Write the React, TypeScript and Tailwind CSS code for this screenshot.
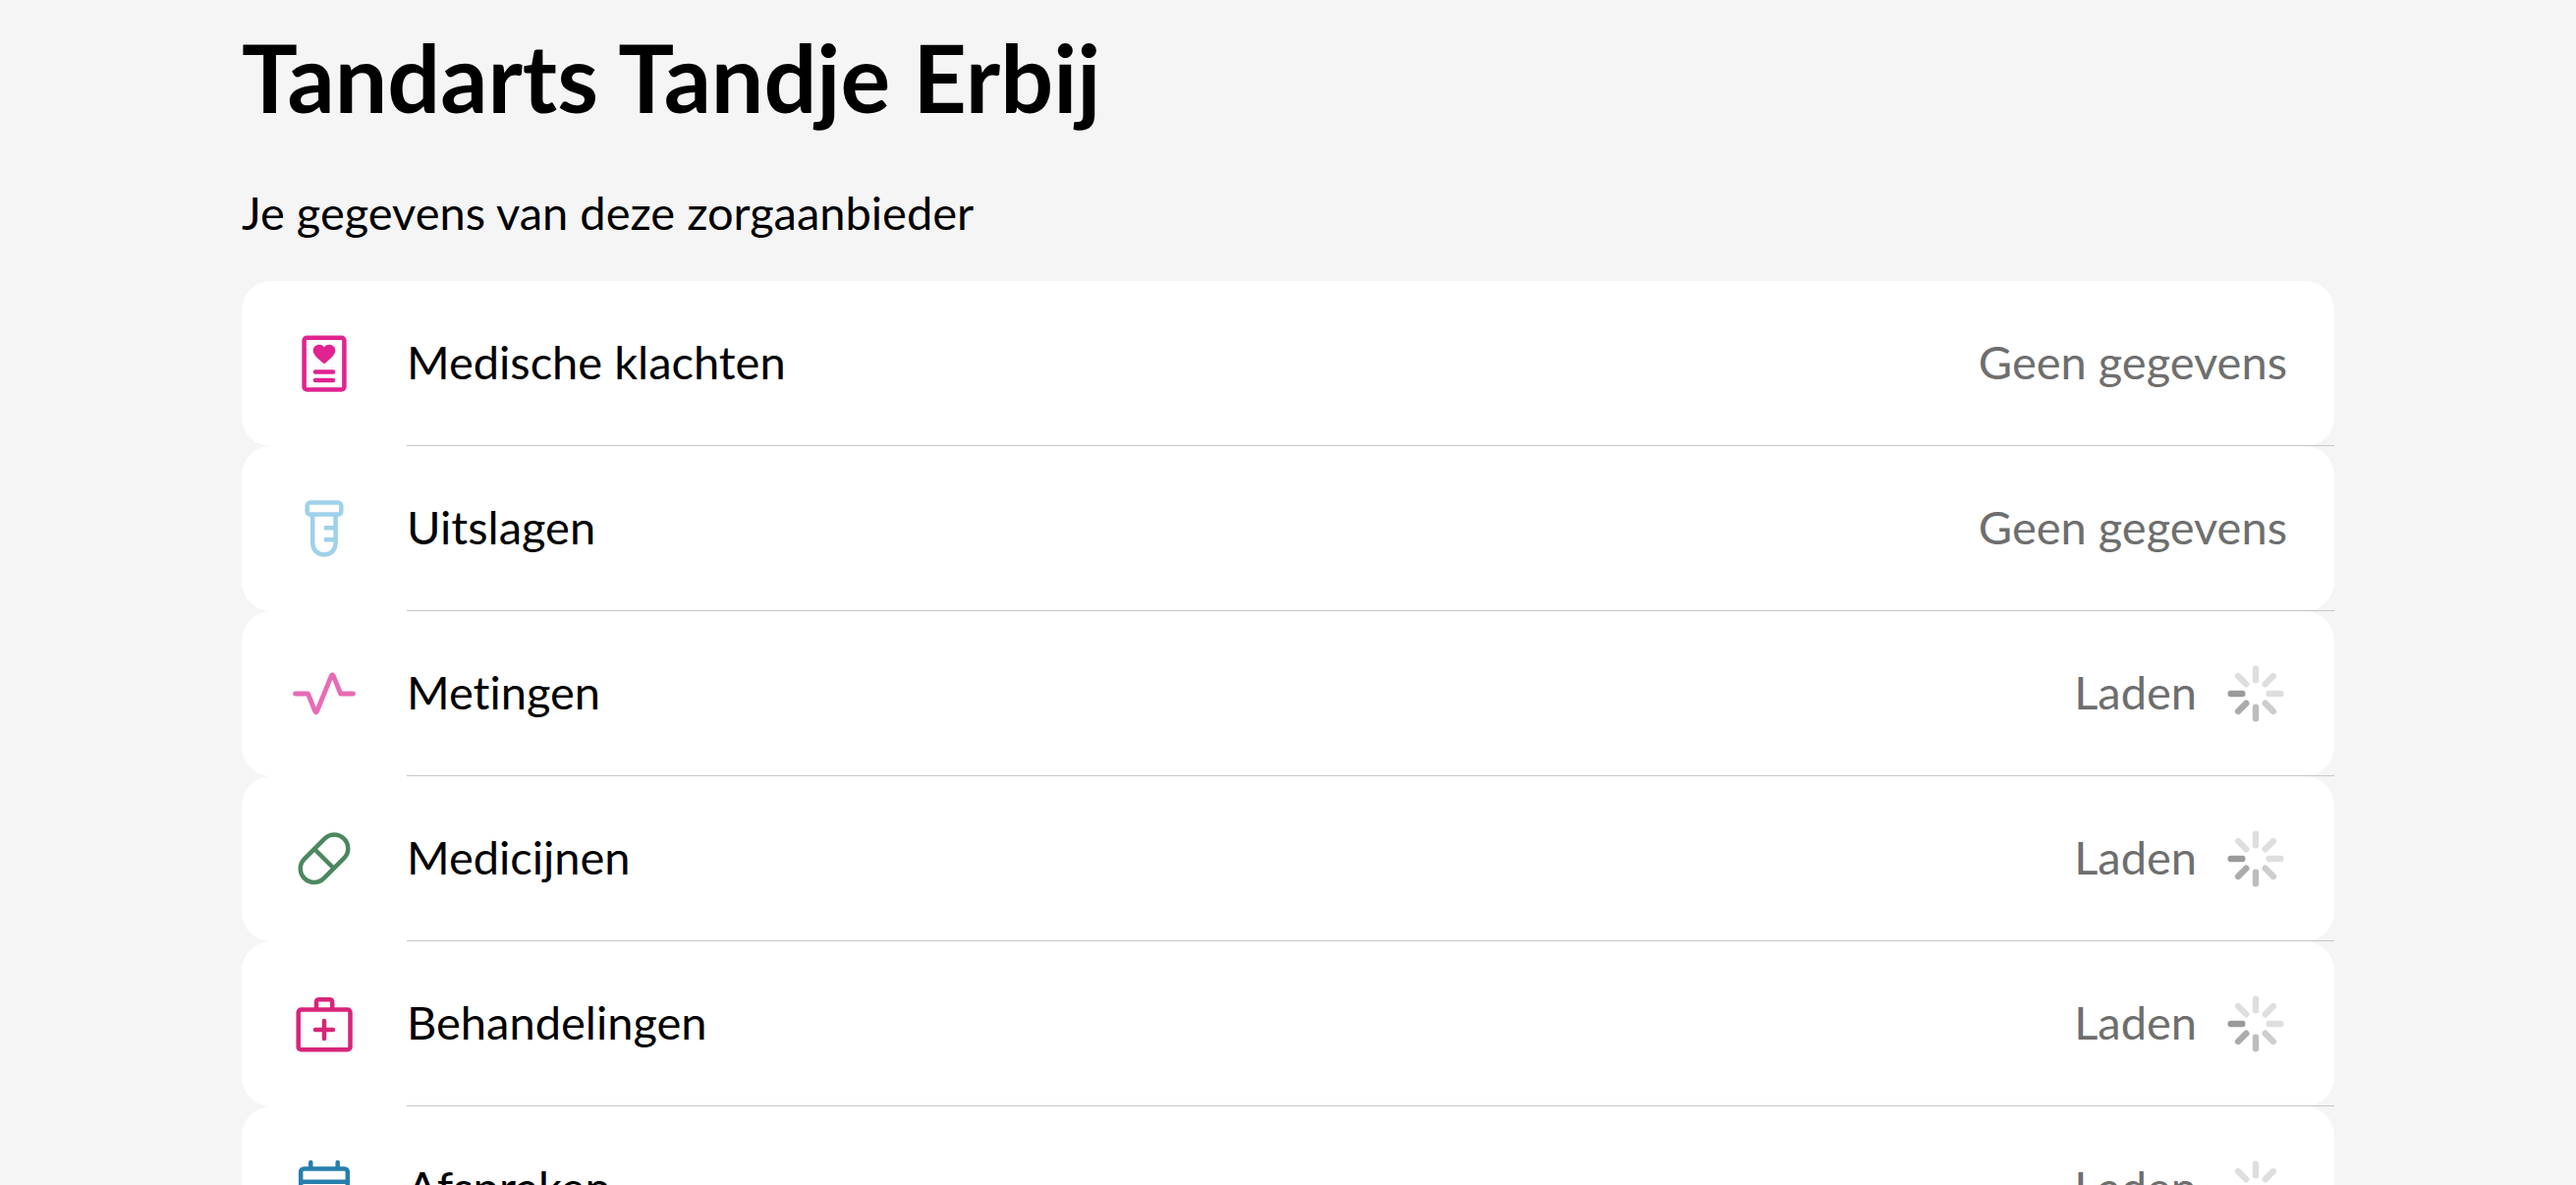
import type { ReactNode } from "react";

type Item = { label: string; loading: boolean; icon: ReactNode };

function Icon({ color, children }: { color: string; children: ReactNode }) {
  return (
    <svg
      viewBox="0 0 80 80"
      className={`size-20 shrink-0 fill-none stroke-current ${color}`}
      strokeWidth="4.5"
      strokeLinecap="round"
      strokeLinejoin="round"
      aria-hidden="true"
    >
      {children}
    </svg>
  );
}

function Spinner() {
  const spokes = [
    { angle: 0, color: "#dedede" },
    { angle: 45, color: "#dedede" },
    { angle: 90, color: "#dedede" },
    { angle: 135, color: "#cdcdcd" },
    { angle: 180, color: "#bcbcbc" },
    { angle: 225, color: "#ababab" },
    { angle: 270, color: "#9a9a9a" },
    { angle: 315, color: "#dedede" },
  ];
  return (
    <svg viewBox="0 0 64 64" className="size-16" aria-hidden="true">
      {spokes.map((s) => (
        <line
          key={s.angle}
          x1="32"
          y1="6.7"
          x2="32"
          y2="18.3"
          stroke={s.color}
          strokeWidth="6.4"
          strokeLinecap="round"
          transform={`rotate(${s.angle} 32 32)`}
        />
      ))}
    </svg>
  );
}

const items: Item[] = [
  {
    label: "Medische klachten",
    loading: false,
    icon: (
      <Icon color="text-[#e02390]">
        <rect x="19.6" y="13.7" width="40.8" height="52.8" rx="2.8" />
        <path
          d="M40 40C39.2 40 38.6 39.6 37.6 38.6C33.4 34.6 28.7 31.4 28.7 26.6C28.7 20.6 36.6 18.6 40 23.2C43.4 18.6 51.3 20.6 51.3 26.6C51.3 31.4 46.6 34.6 42.4 38.6C41.4 39.6 40.8 40 40 40Z"
          fill="currentColor"
          stroke="none"
        />
        <path d="M31 48.5H49M31 57H49" />
      </Icon>
    ),
  },
  {
    label: "Uitslagen",
    loading: false,
    icon: (
      <Icon color="text-[#9fd1ea]">
        <rect x="22.7" y="13.6" width="34.6" height="12" rx="3" />
        <path d="M28.2 26V54.5C28.2 61.5 33 66.4 40 66.4S51.6 61.5 51.6 54.5V26" />
        <path d="M51 39.3H40M51 51.3H40" strokeLinecap="butt" />
      </Icon>
    ),
  },
  {
    label: "Metingen",
    loading: true,
    icon: (
      <Icon color="text-[#e86ab5]">
        <path
          d="M10.5 40H23.5L30.6 57.5Q31.7 60 32.8 57.5L47.2 22Q48.3 19.5 49.4 22L56.7 40H69.5"
          strokeWidth="4.8"
        />
      </Icon>
    ),
  },
  {
    label: "Medicijnen",
    loading: true,
    icon: (
      <Icon color="text-[#4b875f]">
        <rect x="11.5" y="25.8" width="57" height="28" rx="14" transform="rotate(-45 40 39.8)" />
        <path d="M31 31L49.5 49.5" />
      </Icon>
    ),
  },
  {
    label: "Behandelingen",
    loading: true,
    icon: (
      <Icon color="text-[#d7257a]">
        <rect x="13.7" y="25.6" width="52.8" height="40.6" rx="2.8" />
        <path d="M32 25V18Q32 15.2 34.8 15.2H45.4Q48.2 15.2 48.2 18V25" />
        <path d="M40 37V55M31 46H49" />
      </Icon>
    ),
  },
  {
    label: "Afspraken",
    loading: true,
    icon: (
      <Icon color="text-[#267fad]">
        <rect x="16.2" y="19.5" width="47.6" height="46" rx="3" />
        <path d="M26.3 19V13M53.7 19V13M17 32.7H63" />
      </Icon>
    ),
  },
];

export default function App() {
  return (
    <div className="h-screen overflow-hidden bg-[#f5f5f5] font-['Lato',sans-serif] text-black [font-variant-ligatures:none]">
      <main className="px-[246px] pt-6">
        <h1 className="text-[95px] leading-[108px] font-bold">Tandarts Tandje Erbij</h1>
        <h2 className="mt-[50px] text-[47px] leading-[68px] font-normal">Je gegevens van deze zorgaanbieder</h2>
        <ul className="mt-9">
          {items.map((item) => (
            <li key={item.label} className="rounded-[30px] bg-white">
              <div className="flex h-[168px] items-stretch">
                <div className="flex w-[168px] items-center justify-center">{item.icon}</div>
                <div className="flex flex-1 items-center justify-between border-b border-[#c6c6c6] pr-12 text-[47px] leading-[68px]">
                  <span className="pb-1">{item.label}</span>
                  {item.loading ? (
                    <span className="flex items-center gap-7 text-[#6e6e6e]" role="status">
                      <span className="pb-1">Laden</span>
                      <Spinner />
                    </span>
                  ) : (
                    <span className="pb-1 text-[#6e6e6e]">Geen gegevens</span>
                  )}
                </div>
              </div>
            </li>
          ))}
        </ul>
      </main>
    </div>
  );
}
